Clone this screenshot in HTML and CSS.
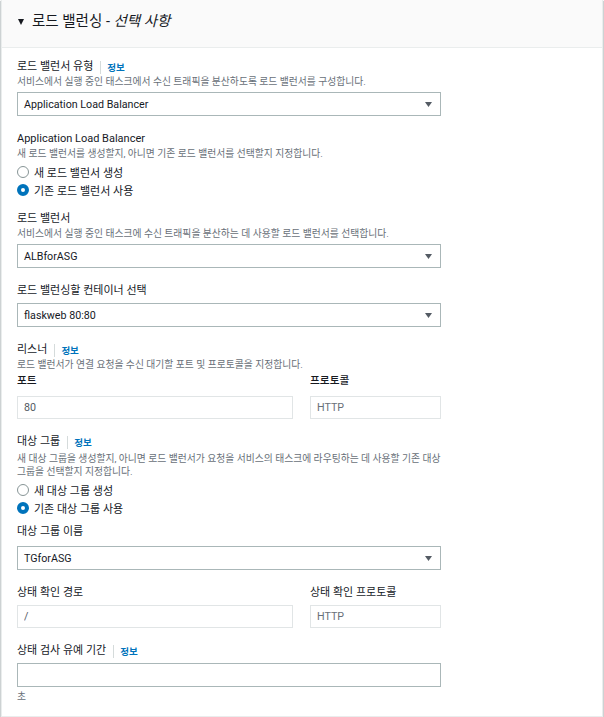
FILE: index.html
```html
<!DOCTYPE html>
<html lang="ko">
<head>
  <meta charset="UTF-8" />
  <title>로드 밸런싱</title>
  <link rel="stylesheet" href="styles.css">
</head>
<body>
  <div class="panel">
    <div class="panel-header">
      <span class="caret"></span>
      <h2>로드 밸런싱 - <em>선택 사항</em></h2>
    </div>

    <div class="panel-body">
      <!-- Load balancer type -->
      <div class="field">
        <div class="field-label">로드 밸런서 유형 <a class="info">정보</a></div>
        <div class="field-desc">서비스에서 실행 중인 태스크에서 수신 트래픽을 분산하도록 로드 밸런서를 구성합니다.</div>
        <div class="select">
          <span>Application Load Balancer</span>
          <svg class="select-arrow" width="7" height="5" viewBox="0 0 7 5"><path d="M0 0h7L3.5 5z" /></svg>
        </div>
      </div>

      <div class="field">
        <div class="field-label">Application Load Balancer</div>
        <div class="field-desc">새 로드 밸런서를 생성할지, 아니면 기존 로드 밸런서를 선택할지 지정합니다.</div>
        <div class="radio-group">
          <label class="radio"><span class="radio-dot"></span>새 로드 밸런서 생성</label>
          <label class="radio"><span class="radio-dot checked"></span>기존 로드 밸런서 사용</label>
        </div>
      </div>

      <div class="field">
        <div class="field-label">로드 밸런서</div>
        <div class="field-desc">서비스에서 실행 중인 태스크에 수신 트래픽을 분산하는 데 사용할 로드 밸런서를 선택합니다.</div>
        <div class="select">
          <span>ALBforASG</span>
          <svg class="select-arrow" width="7" height="5" viewBox="0 0 7 5"><path d="M0 0h7L3.5 5z" /></svg>
        </div>
      </div>

      <div class="field">
        <div class="field-label">로드 밸런싱할 컨테이너 선택</div>
        <div class="select">
          <span>flaskweb 80:80</span>
          <svg class="select-arrow" width="7" height="5" viewBox="0 0 7 5"><path d="M0 0h7L3.5 5z" /></svg>
        </div>
      </div>

      <!-- Listener -->
      <div class="field">
        <div class="field-label">리스너 <a class="info">정보</a></div>
        <div class="field-desc">로드 밸런서가 연결 요청을 수신 대기할 포트 및 프로토콜을 지정합니다.</div>
        <div class="split split-sub">
          <div class="sub-label">포트</div>
          <div class="sub-label">프로토콜</div>
          <input class="input" type="text" value="80" readonly>
          <input class="input" type="text" value="HTTP" disabled>
        </div>
      </div>

      <!-- Target group -->
      <div class="field">
        <div class="field-label">대상 그룹 <a class="info">정보</a></div>
        <div class="field-desc field-desc-long">새 대상 그룹을 생성할지, 아니면 로드 밸런서가 요청을 서비스의 태스크에 라우팅하는 데 사용할 기존 대상 그룹을 선택할지 지정합니다.</div>
        <div class="radio-group">
          <label class="radio"><span class="radio-dot"></span>새 대상 그룹 생성</label>
          <label class="radio"><span class="radio-dot checked"></span>기존 대상 그룹 사용</label>
        </div>
      </div>

      <div class="field field-tight">
        <div class="field-label">대상 그룹 이름</div>
        <div class="select">
          <span>TGforASG</span>
          <svg class="select-arrow" width="7" height="5" viewBox="0 0 7 5"><path d="M0 0h7L3.5 5z" /></svg>
        </div>
      </div>

      <div class="field">
        <div class="split">
          <div class="field-label">상태 확인 경로</div>
          <div class="field-label">상태 확인 프로토콜</div>
          <input class="input" type="text" value="/" readonly>
          <input class="input" type="text" value="HTTP" disabled>
        </div>
      </div>

      <div class="field">
        <div class="field-label">상태 검사 유예 기간 <a class="info">정보</a></div>
        <input class="input input-active" type="text" value="">
        <div class="field-hint">초</div>
      </div>
    </div>
  </div>
</body>
</html>
```

FILE: styles.css
```css
:root {
  --text: #16191f;
  --text-muted: #687078;
  --link: #0073bb;
  --border: #eaeded;
  --border-input: #aab7b8;
  --header-bg: #fafafa;
}

body {
  margin: 0;
  background-color: #ffffff;
  color: var(--text);
  font-family: Roboto, "Noto Sans CJK KR", sans-serif;
}

/* Panel */
.panel {
  margin: 0 1px;
  border: 1px solid var(--border);
  border-top: none;
  box-shadow: 0 1px 1px 0 rgba(0, 28, 36, 0.3), 1px 1px 1px 0 rgba(0, 28, 36, 0.15), -1px 1px 1px 0 rgba(0, 28, 36, 0.15);
}

.panel-header {
  display: flex;
  align-items: center;
  gap: 8px;
  height: 48px;
  box-sizing: border-box;
  padding: 0 0 3px 16px;
  background-color: var(--header-bg);
  border-bottom: 1px solid var(--border);
}

.caret {
  width: 0;
  height: 0;
  border-left: 3.5px solid transparent;
  border-right: 3.5px solid transparent;
  border-top: 6px solid var(--text);
}

.panel-header h2 {
  margin: 0;
  font-size: 14.5px;
  font-weight: normal;
  line-height: 20px;
}

.panel-header em {
  font-style: italic;
}

.panel-body {
  padding: 11px 15px 13px;
}

/* Fields */
.field {
  width: 424px;
}

.field + .field {
  margin-top: 15px;
}

.field.field-tight {
  margin-top: 10px;
}

.field-label {
  display: flex;
  align-items: center;
  font-size: 11px;
  line-height: 16px;
}

.info {
  margin-left: 7px;
  padding-left: 6px;
  border-left: 1px solid #d5dbdb;
  color: var(--link);
  font-size: 9.5px;
  font-weight: bold;
  line-height: 13px;
}

.field-desc {
  font-size: 9.8px;
  line-height: 13px;
  color: var(--text-muted);
}

.field-desc-long {
  margin-top: 2px;
}

.field-hint {
  margin-top: 3px;
  font-size: 9.8px;
  line-height: 13px;
  color: var(--text-muted);
}

/* Select */
.select {
  display: flex;
  justify-content: space-between;
  align-items: center;
  height: 24px;
  box-sizing: border-box;
  margin-top: 4px;
  padding: 0 8px 0 6px;
  border: 1px solid var(--border-input);
  font-size: 10.7px;
}

.field-tight .select {
  margin-top: 6px;
}

.select-arrow path {
  fill: #545b64;
}

/* Radios */
.radio-group {
  display: flex;
  flex-direction: column;
  gap: 2px;
  margin: 4px 0 -2px;
}

.radio {
  display: flex;
  align-items: center;
  gap: 5px;
  height: 16px;
  font-size: 11px;
}

.radio-dot {
  width: 12px;
  height: 12px;
  box-sizing: border-box;
  border: 1px solid #879596;
  border-radius: 50%;
  background-color: #ffffff;
}

.radio-dot.checked {
  border: 4px solid var(--link);
}

/* Two column rows */
.split {
  display: grid;
  grid-template-columns: 1fr 131px;
  column-gap: 17px;
}

.split .input {
  margin-top: 4px;
}

.split-sub {
  margin-top: 2px;
}

.split-sub .input {
  margin-top: 7px;
}

.sub-label {
  font-size: 10.7px;
  font-weight: 500;
  line-height: 16px;
}

/* Inputs */
.input {
  display: block;
  width: 100%;
  height: 23px;
  box-sizing: border-box;
  margin: 4px 0 0;
  padding: 0 6px;
  border: 1px solid #e1e5e6;
  background-color: #ffffff;
  color: #545b64;
  font-family: Roboto, "Noto Sans CJK KR", sans-serif;
  font-size: 10.7px;
  outline: none;
}

.input:disabled {
  background-color: #ffffff;
  color: #687078;
}

.input-active {
  height: 24px;
  border-color: var(--border-input);
}
```
